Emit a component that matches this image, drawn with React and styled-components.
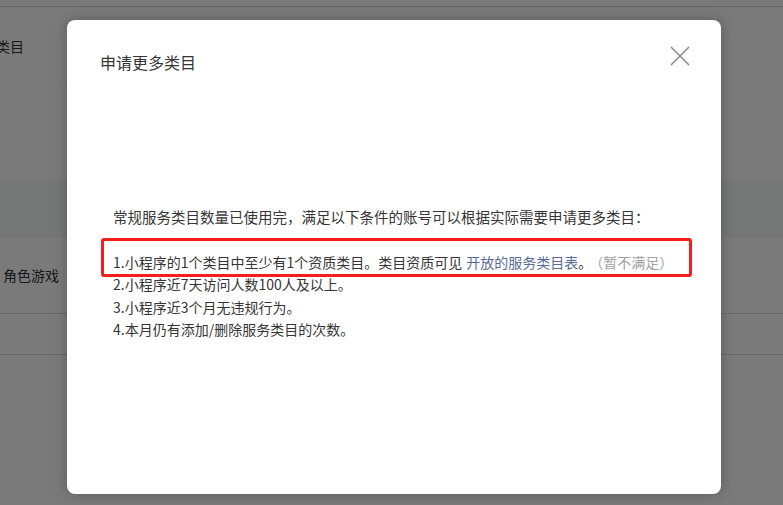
import React from 'react'
import styled, { createGlobalStyle } from 'styled-components'

const GlobalStyle = createGlobalStyle`
  html, body {
    margin: 0;
    padding: 0;
    background: #ffffff;
    font-family: "Noto Sans CJK SC", "Noto Sans", sans-serif;
    overflow: hidden;
  }
`

const Page = styled.div`
  position: relative;
  width: 783px;
  height: 505px;
  overflow: hidden;
  background: #ffffff;
`

const Table = styled.div`
  display: flex;
  flex-direction: column;
  padding-top: 6px;
`

const Row = styled.div`
  display: flex;
  align-items: center;
  height: ${props => props.height}px;
  border-top: 1px solid ${props => props.line};
  background: ${props => props.tint || 'transparent'};
  box-sizing: border-box;
  overflow: hidden;
`

const Cell = styled.div`
  margin-left: ${props => props.offset}px;
  font-size: 14px;
  color: #353535;
  white-space: nowrap;
`

const Mask = styled.div`
  position: absolute;
  inset: 0;
  background: rgba(0, 0, 0, 0.52);
`

const Dialog = styled.div`
  position: absolute;
  left: 67px;
  top: 20px;
  width: 654px;
  height: 474px;
  background: #ffffff;
  border-radius: 8px;
  box-shadow: 0 0 14px rgba(0, 0, 0, 0.25);
  display: flex;
  flex-direction: column;
  box-sizing: border-box;
  padding: 30px 0 0 33px;
`

const Header = styled.div`
  display: flex;
  align-items: center;
  height: 24px;
`

const Title = styled.div`
  font-size: 16px;
  line-height: 24px;
  color: #353535;
`

const CloseButton = styled.button`
  position: absolute;
  top: 17px;
  right: 22px;
  width: 38px;
  height: 38px;
  border: none;
  background: none;
  padding: 0;
  cursor: pointer;
  display: flex;
  align-items: center;
  justify-content: center;
`

const Body = styled.div`
  position: relative;
  margin-top: 132px;
  padding-left: 13px;
  font-size: 14px;
  line-height: 22.5px;
  color: #353535;
`

const Intro = styled.p`
  margin: 0 0 22px;
  font-size: 14.5px;
  white-space: nowrap;
`

const Rule = styled.div`
  white-space: nowrap;
`

const Link = styled.a`
  color: #576b95;
  text-decoration: none;
  margin-left: 4px;
`

const Muted = styled.span`
  color: #a0a0a0;
  margin-left: 4px;
`

const Highlight = styled.div`
  position: absolute;
  left: 1px;
  top: 32px;
  width: 591px;
  height: 39px;
  border: 3px solid #f51d1d;
  border-radius: 3px;
  box-sizing: border-box;
  pointer-events: none;
`

const rules = [
  '2.小程序近7天访问人数100人及以上。',
  '3.小程序近3个月无违规行为。',
  '4.本月仍有添加/删除服务类目的次数。'
]

export default function App () {
  return (
    <Page>
      <GlobalStyle />
      <Table>
        <Row height={78} line='#d6d6d6'>
          <Cell offset={-4}>类目</Cell>
        </Row>
        <Row height={96} line='#f7f7f7' />
        <Row height={56} line='#f4f4f4' tint='#f3f9f7' />
        <Row height={77} line='#f4f4f4'>
          <Cell offset={3}>角色游戏</Cell>
        </Row>
        <Row height={41} line='#d9d9d9' />
        <Row height={150} line='#d9d9d9' />
      </Table>
      <Mask />
      <Dialog>
        <Header>
          <Title>申请更多类目</Title>
        </Header>
        <CloseButton aria-label='关闭'>
          <svg width='20' height='20' viewBox='0 0 20 20'>
            <path d='M1 1 L19 19 M19 1 L1 19' stroke='#8c8c8c' strokeWidth='1.6' fill='none' />
          </svg>
        </CloseButton>
        <Body>
          <Intro>常规服务类目数量已使用完，满足以下条件的账号可以根据实际需要申请更多类目：</Intro>
          <Rule>
            1.小程序的1个类目中至少有1个资质类目。类目资质可见
            <Link href='#'>开放的服务类目表</Link>。
            <Muted>（暂不满足）</Muted>
          </Rule>
          {rules.map(text => <Rule key={text}>{text}</Rule>)}
          <Highlight />
        </Body>
      </Dialog>
    </Page>
  )
}
